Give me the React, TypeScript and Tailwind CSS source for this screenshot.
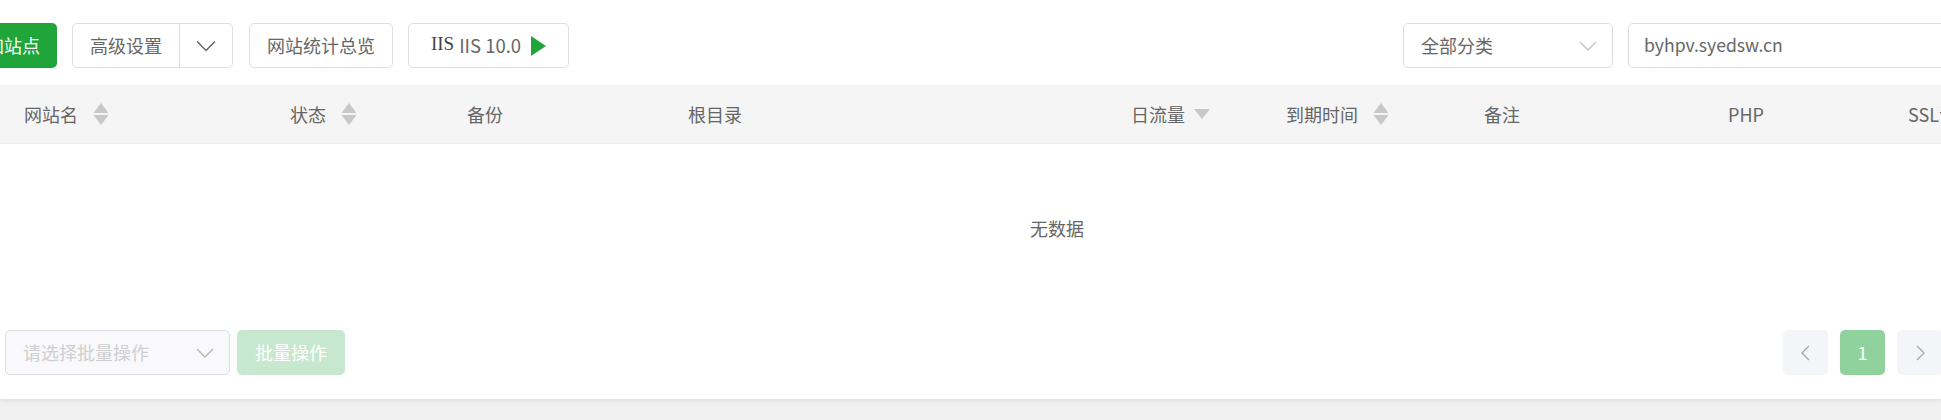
import React from "react";

const FONT = "font-['Microsoft_YaHei','Noto_Sans_CJK_SC','Noto_Sans',sans-serif]";

function Sort() {
  return (
    <svg width="16" height="22" viewBox="0 0 16 22" className="ml-[15px] shrink-0" aria-hidden>
      <path d="M8 0 L15.5 10 H0.5 Z" fill="#c8c8c8" />
      <path d="M8 22 L15.5 12 H0.5 Z" fill="#c8c8c8" />
    </svg>
  );
}

function Chevron({ dir, color, size = 18 }: { dir: "down" | "left" | "right"; color: string; size?: number }) {
  const d =
    dir === "down" ? "M1 5 L9 13 L17 5" : dir === "left" ? "M12 2 L5 9 L12 16" : "M6 2 L13 9 L6 16";
  return (
    <svg width={size} height={size} viewBox="0 0 18 18" fill="none" stroke={color} strokeWidth="1.4" aria-hidden>
      <path d={d} />
    </svg>
  );
}

const cols: { label: string; w: string; sort?: boolean; desc?: boolean }[] = [
  { label: "网站名", w: "w-[290px]", sort: true },
  { label: "状态", w: "w-[177px]", sort: true },
  { label: "备份", w: "w-[221px]" },
  { label: "根目录", w: "w-[443px]" },
  { label: "日流量", w: "w-[155px]", desc: true },
  { label: "到期时间", w: "w-[198px]", sort: true },
  { label: "备注", w: "w-[244px]" },
  { label: "PHP", w: "w-[180px]" },
  { label: "SSL证书", w: "w-[160px]" },
];

export default function App() {
  return (
    <div className={`h-[420px] w-[1941px] overflow-hidden bg-[#f1f1f1] text-[18px] text-[#666] ${FONT}`}>
      <div className="h-[399px] bg-white shadow-[0_1px_5px_rgba(0,0,0,0.1)]">
        <div className="flex h-[85px] items-start pt-[23px]">
          <button className="ml-[-60px] h-[45px] w-[117px] shrink-0 rounded-[5px] bg-[#20a53a] pr-[17px] text-right text-white">
            添加站点
          </button>
          <div className="ml-[15px] flex h-[45px] w-[161px] shrink-0 rounded-[5px] border border-[#dcdfe6]">
            <span className="flex w-[107px] items-center justify-center border-r border-[#dcdfe6]">高级设置</span>
            <span className="flex flex-1 items-center justify-center">
              <Chevron dir="down" color="#666" size={20} />
            </span>
          </div>
          <button className="ml-[16px] h-[45px] w-[144px] shrink-0 rounded-[5px] border border-[#dcdfe6]">
            网站统计总览
          </button>
          <div className="ml-[15px] flex h-[45px] w-[161px] shrink-0 items-center justify-center gap-[5px] rounded-[5px] border border-[#dcdfe6]">
            <span className="mt-[-3px] font-['Liberation_Serif',serif] text-[19px] text-[#444]">IIS</span>
            <span className="text-[18.5px]">IIS 10.0</span>
            <svg width="15" height="20" viewBox="0 0 15 20" className="ml-[5px]" aria-hidden>
              <path d="M0 0 L15 10 L0 20 Z" fill="#20a53a" />
            </svg>
          </div>
          <div className="ml-auto flex h-[45px] w-[210px] shrink-0 items-center justify-between rounded-[5px] border border-[#dcdfe6] pl-[17px] pr-[15px]">
            <span>全部分类</span>
            <Chevron dir="down" color="#c0c4cc" />
          </div>
          <div className="ml-[15px] mr-[-40px] flex h-[45px] w-[353px] shrink-0 items-center rounded-[5px] border border-[#dcdfe6] pl-[15px] text-[17.6px]">
            byhpv.syedsw.cn
          </div>
        </div>
        <div className="flex h-[59px] items-center overflow-hidden border-b border-[#ebeef5] bg-[#f5f5f5]">
          {cols.map((c, i) => (
            <div key={c.label} className={`flex shrink-0 items-center ${c.w} ${i === 0 ? "pl-[24px]" : ""}`}>
              <span className="whitespace-nowrap">{c.label}</span>
              {c.sort && <Sort />}
              {c.desc && (
                <svg width="16" height="10" viewBox="0 0 16 10" className="ml-[9px]" aria-hidden>
                  <path d="M8 10 L16 0 H0 Z" fill="#c8c8c8" />
                </svg>
              )}
            </div>
          ))}
        </div>
        <div className="flex h-[186px] items-start pl-[1030px] pt-[72px] leading-[24px]">
          <span>无数据</span>
        </div>
        <div className="flex h-[45px] items-center">
          <div className="ml-[5px] flex h-[45px] w-[225px] shrink-0 items-center justify-between rounded-[5px] border border-[#dcdfe6] bg-[#f9f9fb] pl-[17px] pr-[15px] text-[#cfcfcf]">
            <span>请选择批量操作</span>
            <Chevron dir="down" color="#b4b4b8" />
          </div>
          <button className="ml-[7px] h-[45px] w-[108px] shrink-0 rounded-[5px] bg-[#c7e8ce] text-white">批量操作</button>
          <div className="ml-auto flex items-center">
            <span className="flex h-[45px] w-[45px] items-center justify-center rounded-[5px] bg-[#f4f5f9]">
              <Chevron dir="left" color="#a8a8b0" />
            </span>
            <span className="ml-[12px] flex h-[45px] w-[45px] items-center justify-center rounded-[5px] bg-[#90d29e] text-white">1</span>
            <span className="ml-[12px] mr-[-1px] flex h-[45px] w-[45px] items-center justify-center rounded-[5px] bg-[#f4f5f9]">
              <Chevron dir="right" color="#a8a8b0" />
            </span>
          </div>
        </div>
      </div>
    </div>
  );
}
